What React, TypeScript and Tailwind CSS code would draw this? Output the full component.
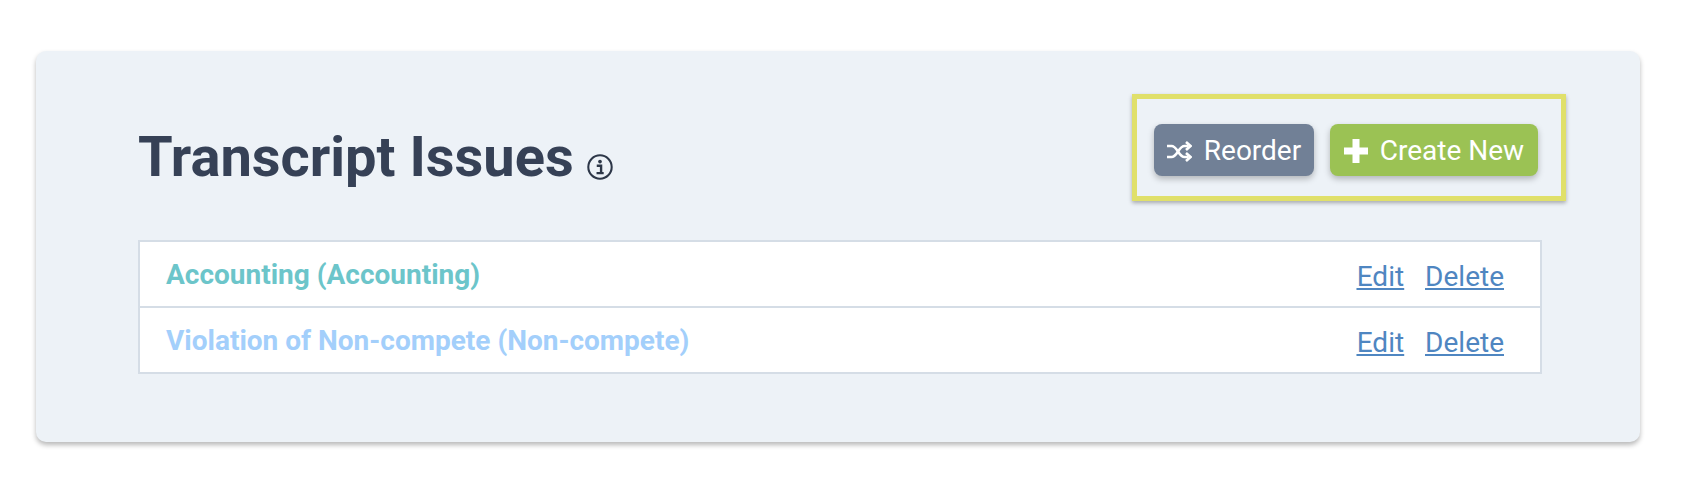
const rows = [
  { label: "Accounting (Accounting)", color: "text-[#6cc5ca]", box: "h-[64px]" },
  { label: "Violation of Non-compete (Non-compete)", color: "text-[#a3cffb]", box: "h-[66px] border-t-2 border-[#d5dde6]" },
];

export default function App() {
  return (
    <div className="h-[494px] bg-white pl-[36px] pt-[51px] font-['Roboto',sans-serif]">
      <div className="h-[391px] w-[1604px] rounded-[10px] bg-[#edf2f7] pl-[102px] pr-[98px] pt-[43px] shadow-[0_3px_5px_rgba(0,0,0,0.28)]">
        <div className="flex h-[146px] items-start justify-between">
          <div className="mt-[30px] flex items-baseline gap-[13px]">
            <h1 className="text-[56px] leading-[66px] font-bold text-[#364156]">Transcript Issues</h1>
            <svg viewBox="0 0 24 24" className="h-[26px] w-[26px] translate-y-[4px] text-[#2d3748]" fill="none" stroke="currentColor">
              <circle cx="12" cy="12" r="10.8" strokeWidth="1.9" />
              <circle cx="12" cy="7" r="1.7" fill="currentColor" stroke="none" />
              <path d="M9 10.800h4v6.400M8.800 17.600h6.600" strokeWidth="2.200" />
            </svg>
          </div>
          <div className="-mr-[24px] flex h-[107px] w-[434px] items-start gap-[16px] border-[5px] border-[#e0e06a] pl-[17px] pt-[25px] shadow-[0_2px_4px_rgba(0,0,0,0.3)]">
            <button className="flex h-[52px] w-[160px] items-center justify-center gap-[12px] rounded-[8px] bg-[#718096] pt-[2px] text-[28px] text-white shadow-[0_3px_6px_rgba(0,0,0,0.25)]">
              <svg viewBox="0 0 25 21" className="h-[21px] w-[25px]" fill="none" stroke="currentColor" strokeWidth="2.600">
                <path d="M0 5h4.500c3 0 4.500 2.500 6.500 5.500s3.500 5.500 6.500 5.500h4" />
                <path d="M0 16h4.500c3 0 4.500-2.500 6.500-5.500s3.500-5.500 6.500-5.500h4" />
                <path d="M19 1l4.500 4-4.500 4M19 12l4.500 4-4.500 4" />
              </svg>
              Reorder
            </button>
            <button className="flex h-[52px] w-[208px] items-center justify-center gap-[12px] rounded-[8px] bg-[#9bc254] pt-[2px] text-[28px] text-white shadow-[0_3px_6px_rgba(0,0,0,0.25)]">
              <svg viewBox="0 0 24 24" className="h-[24px] w-[24px]" fill="currentColor">
                <path d="M8.500 0h7v8.500H24v7h-8.500V24h-7v-8.500H0v-7h8.500z" />
              </svg>
              Create New
            </button>
          </div>
        </div>
        <div className="w-[1404px] border-2 border-[#d5dde6] bg-white">
          {rows.map((r) => (
            <div key={r.label} className={`flex items-center justify-between pl-[26px] pr-[36px] pt-[2px] ${r.box}`}>
              <span className={`text-[28px] font-bold ${r.color}`}>{r.label}</span>
              <span className="flex gap-[21px] pt-[3px] text-[28px] text-[#4f86c1] underline">
                <a href="#">Edit</a>
                <a href="#">Delete</a>
              </span>
            </div>
          ))}
        </div>
      </div>
    </div>
  );
}
